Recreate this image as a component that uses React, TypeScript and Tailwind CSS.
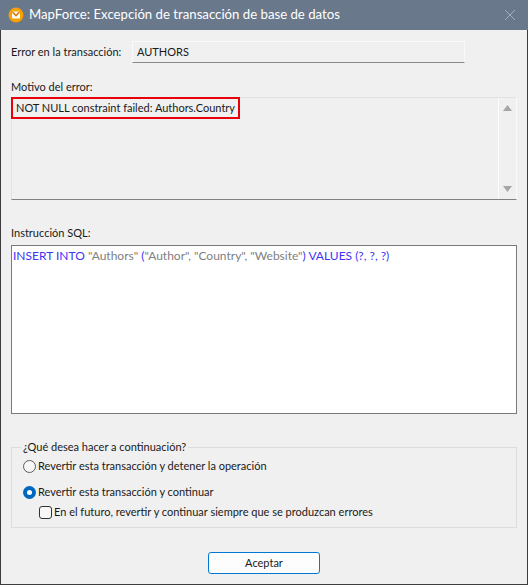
const font = { fontFamily: 'Lato, "Noto Sans", sans-serif' };

function TitleIcon() {
  return (
    <svg width="16" height="16" viewBox="0 0 16 16">
      <circle cx="8" cy="8" r="7.5" fill="#f59e0b" />
      <circle cx="8" cy="8" r="6" fill="#f7a300" />
      <rect x="4" y="4.5" width="8" height="7" rx="1" fill="#fff" />
      <path d="M4.5 5 L8 8.5 L11.5 5" stroke="#e07b00" strokeWidth="1.6" fill="none" />
    </svg>
  );
}

function Radio({ checked }: { checked?: boolean }) {
  if (checked) {
    return (
      <span className="w-[13px] h-[13px] rounded-full bg-[#0067c0] flex items-center justify-center shrink-0">
        <span className="w-[5px] h-[5px] rounded-full bg-white" />
      </span>
    );
  }
  return <span className="w-[13px] h-[13px] rounded-full border border-[#5c5c5c] bg-[#f7f7f7] shrink-0" />;
}

export default function App() {
  return (
    <div className="w-[528px] h-[585px] flex flex-col text-[11px] text-[#1a1a1a]" style={font}>
      {/* title bar */}
      <div className="h-[30px] bg-[#6a788b] flex items-center pl-[8px] pr-[12px] shrink-0">
        <TitleIcon />
        <span className="ml-[5px] text-white text-[13.2px]">MapForce: Excepción de transacción de base de datos</span>
        <span className="ml-auto">
          <svg width="12" height="12" viewBox="0 0 12 12">
            <path d="M1 1 L11 11 M11 1 L1 11" stroke="#a3adbb" strokeWidth="1" />
          </svg>
        </span>
      </div>

      <div className="flex-1 bg-[#f0f0f0] border-x border-b border-[#3c3c3c] px-[10px] flex flex-col">
        <div className="flex items-center mt-[11px] h-[22px]">
          <span className="w-[121px]">Error en la transacción:</span>
          <div className="w-[333px] h-[22px] border border-[#fafafa] border-b-[#8a8a8a] border-r-[#fafafa] bg-[#f0f0f0] pl-[4px] flex items-center">
            AUTHORS
          </div>
        </div>

        <div className="mt-[16px] leading-[16px]">Motivo del error:</div>
        <div className="mt-[2px] h-[103px] flex border border-[#e3e3e3] border-b-[#808080] border-r-[#fafafa] bg-[#f0f0f0]">
          <div className="flex-1 flex items-start">
            <div className="border-2 border-[#e8000b] px-[3px] h-[22px] flex items-center -ml-[1px] -mt-[1px]">
              NOT NULL constraint failed: Authors.Country
            </div>
          </div>
          <div className="w-[18px] border-l border-[#fcfcfc] flex flex-col items-center justify-between py-[7px]">
            <svg width="9" height="6" viewBox="0 0 9 6"><path d="M0 6 L4.5 0 L9 6 Z" fill="#a6a6a6" /></svg>
            <svg width="9" height="6" viewBox="0 0 9 6"><path d="M0 0 L4.5 6 L9 0 Z" fill="#a6a6a6" /></svg>
          </div>
        </div>

        <div className="mt-[25px] leading-[16px]">Instrucción SQL:</div>
        <div className="mt-[4px] h-[169px] bg-white border border-[#7a7a7a] px-[1px] pt-[1px] text-[12px]">
          <span className="text-[#3d35f5]">INSERT INTO </span>
          <span className="text-[#808080]">"Authors" </span>
          <span className="text-[#3d35f5]">(</span>
          <span className="text-[#808080]">"Author", "Country", "Website"</span>
          <span className="text-[#3d35f5]">) VALUES (?, ?, ?)</span>
        </div>

        <fieldset className="mt-[25px] h-[89px] border border-[#dcdcdc] pl-[11px] pr-[8px] pt-[2px] m-0">
          <legend className="px-[2px] -ml-[2px] leading-[16px]">¿Qué desea hacer a continuación?</legend>
          <div className="flex items-center gap-[2px] h-[18px]">
            <Radio />
            <span>Revertir esta transacción y detener la operación</span>
          </div>
          <div className="flex items-center gap-[2px] h-[18px] mt-[8px]">
            <Radio checked />
            <span>Revertir esta transacción y continuar</span>
          </div>
          <div className="flex items-center gap-[2px] h-[18px] mt-[2px] ml-[16px]">
            <span className="w-[13px] h-[13px] rounded-[3px] border border-[#333] bg-[#f7f7f7] shrink-0" />
            <span>En el futuro, revertir y continuar siempre que se produzcan errores</span>
          </div>
        </fieldset>

        <div className="flex justify-center mt-[24px]">
          <button className="w-[112px] h-[22px] rounded-[3px] border border-[#0078d4] bg-[#fdfdfd] text-[11px]">
            Aceptar
          </button>
        </div>
      </div>
    </div>
  );
}
